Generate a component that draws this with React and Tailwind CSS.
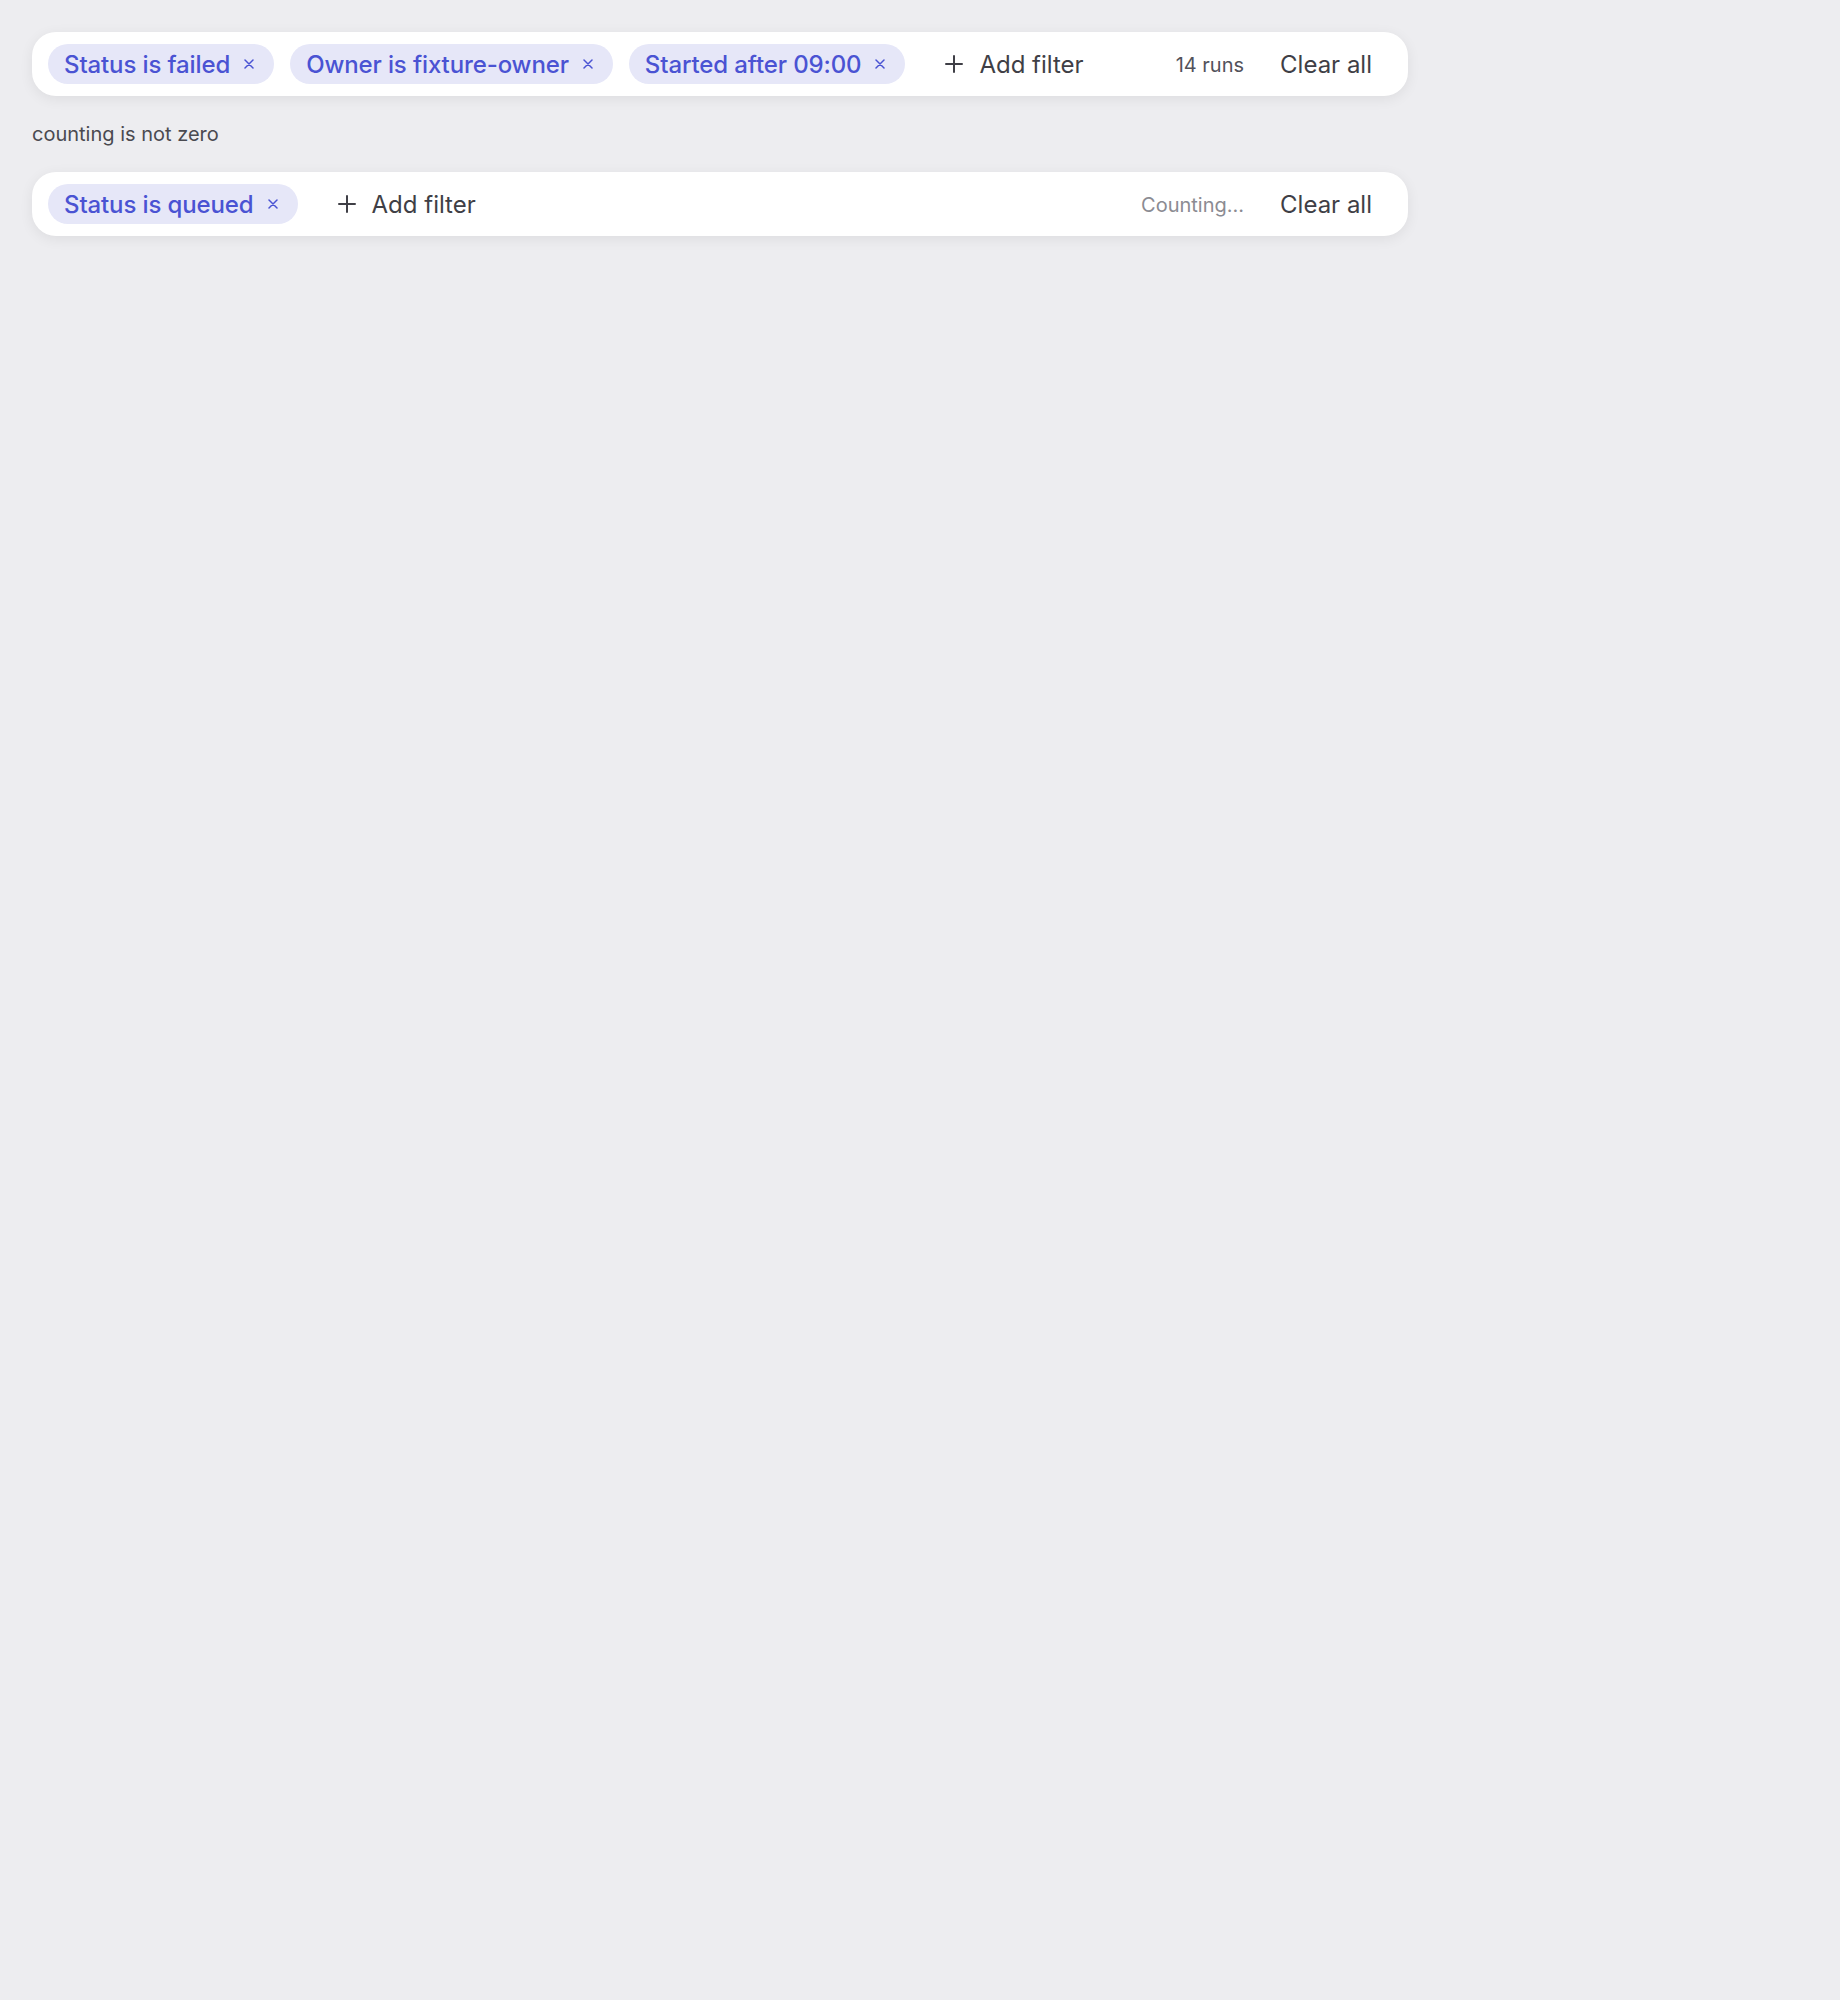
import React from 'react';

const PlusIcon = () => (
    <svg width="18" height="18" viewBox="0 0 18 18" fill="none" stroke="currentColor" strokeWidth="2" strokeLinecap="round">
        <path d="M9 1v16M1 9h16" />
    </svg>
);

const XIcon = () => (
    <svg width="10" height="10" viewBox="0 0 10 10" fill="none" stroke="currentColor" strokeWidth="1.5" strokeLinecap="round">
        <path d="M1 1l8 8M9 1l-8 8" />
    </svg>
);

const FilterChip = ({ label }) => (
    <span className="flex h-10 items-center gap-[14px] rounded-full bg-[#e6e7f8] pl-4 pr-5 text-[24px] font-medium leading-8 text-[#4a53d3]">
        <span className="translate-y-px tracking-[-0.005em]">{label}</span>
        <XIcon />
    </span>
);

const FilterBar = ({ filters, count, counting }) => (
    <div className="flex h-16 w-[1376px] items-center gap-4 rounded-3xl bg-white py-3 pl-4 pr-4 shadow-[0_3px_14px_rgba(0,0,0,0.07)]">
        {filters.map(f => (
            <FilterChip key={f} label={f} />
        ))}
        <button className="flex items-center gap-4 pl-6 text-[24px] leading-8 text-[#3f3f46]">
            <PlusIcon />
            <span className="translate-y-px">Add filter</span>
        </button>
        <span className={`ml-auto translate-y-px text-[20px] leading-7 ${counting ? 'text-[#8b8b92]' : 'text-[#52525b]'}`}>
            {counting ? 'Counting...' : `${count} runs`}
        </span>
        <button className="translate-y-px pl-5 pr-5 text-[24px] leading-8 text-[#3f3f46]">Clear all</button>
    </div>
);

export default function App() {
    return (
        <div className="min-h-screen bg-[#ededf0] p-8" style={{ fontFamily: 'Inter, "Noto Sans", sans-serif' }}>
            <div className="flex flex-col gap-6">
                <FilterBar filters={['Status is failed', 'Owner is fixture-owner', 'Started after 09:00']} count={14} />
                <p className="text-[20px] leading-7 text-[#4a4a50]">counting is not zero</p>
                <FilterBar filters={['Status is queued']} counting />
            </div>
        </div>
    );
}
